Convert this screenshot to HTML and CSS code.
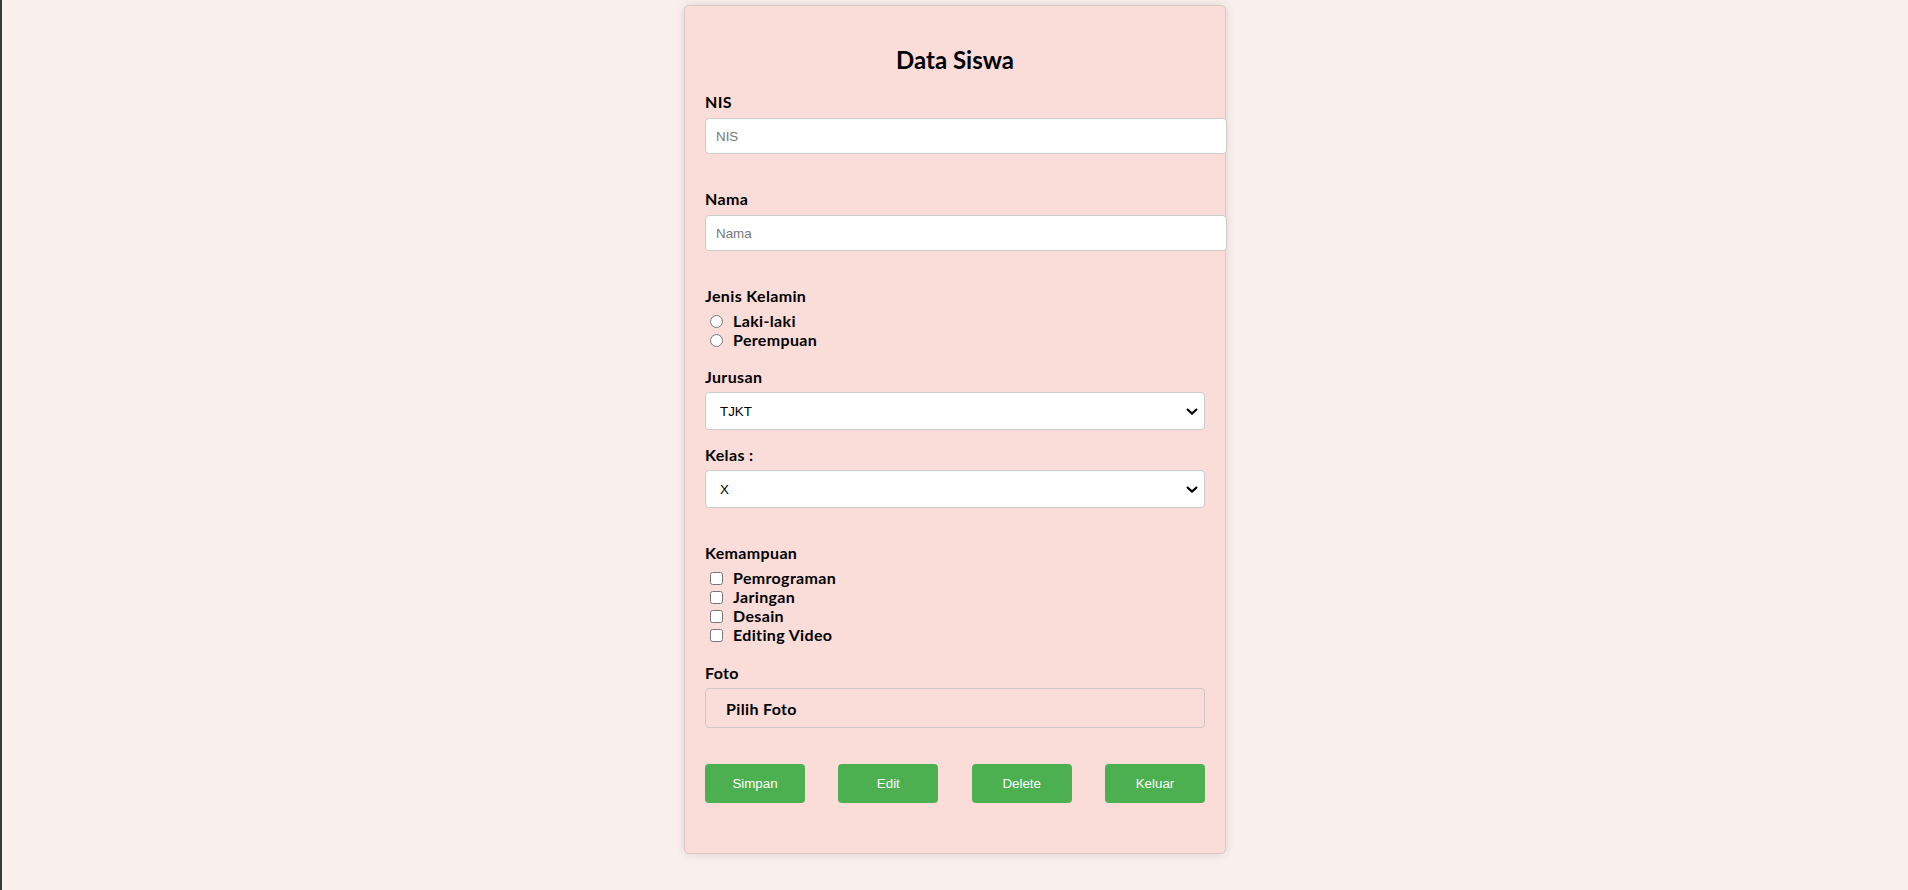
FILE: index.html
```html
<!DOCTYPE html>
<html lang="id">
<head>
<meta charset="utf-8">
<title>Data Siswa</title>
<link rel="stylesheet" href="styles.css">
</head>
<body>
<div class="page">
  <form class="card">
    <h2 class="title">Data Siswa</h2>

    <div class="field field-text">
      <label class="label" for="nis">NIS</label>
      <input class="text-input" id="nis" type="text" placeholder="NIS">
    </div>

    <div class="field field-text">
      <label class="label" for="nama">Nama</label>
      <input class="text-input" id="nama" type="text" placeholder="Nama">
    </div>

    <div class="field field-choice">
      <span class="label">Jenis Kelamin</span>
      <div class="options">
        <label class="option"><input class="opt-radio" type="radio" name="jk"><span>Laki-laki</span></label>
        <label class="option"><input class="opt-radio" type="radio" name="jk"><span>Perempuan</span></label>
      </div>
    </div>

    <div class="field field-select">
      <label class="label" for="jurusan">Jurusan</label>
      <select class="select" id="jurusan">
        <option>TJKT</option>
      </select>
    </div>

    <div class="field field-select-last">
      <label class="label" for="kelas">Kelas :</label>
      <select class="select" id="kelas">
        <option>X</option>
      </select>
    </div>

    <div class="field field-skills">
      <span class="label">Kemampuan</span>
      <div class="options">
        <label class="option"><input class="opt-check" type="checkbox"><span>Pemrograman</span></label>
        <label class="option"><input class="opt-check" type="checkbox"><span>Jaringan</span></label>
        <label class="option"><input class="opt-check" type="checkbox"><span>Desain</span></label>
        <label class="option"><input class="opt-check" type="checkbox"><span>Editing Video</span></label>
      </div>
    </div>

    <div class="field field-photo">
      <span class="label">Foto</span>
      <label class="file-box">Pilih Foto</label>
    </div>

    <div class="actions">
      <button class="btn" type="button">Simpan</button>
      <button class="btn" type="button">Edit</button>
      <button class="btn" type="button">Delete</button>
      <button class="btn" type="button">Keluar</button>
    </div>
  </form>
</div>
</body>
</html>
```

FILE: styles.css
```css
html, body {
  margin: 0;
  padding: 0;
}

body {
  background: #f9f0ee;
  font-family: Lato, "Open Sans", sans-serif;
  color: #000;
}

.page {
  min-height: 890px;
  box-sizing: border-box;
  border-left: 2px solid #3a3a3a;
  padding-top: 5px;
}

.card {
  width: 500px;
  margin: 0 auto;
  padding: 20px 20px 20px 20px;
  background: #fadcd8;
  border: 1px solid #d9c9c7;
  border-radius: 5px;
  box-shadow: 0 0 10px rgba(0, 0, 0, 0.12);
}

.title {
  margin: 19px 0 17px 0;
  font-size: 24px;
  line-height: 30px;
  font-weight: 700;
  text-align: center;
}

.label {
  display: block;
  font-size: 16px;
  line-height: 20px;
  font-weight: 700;
  letter-spacing: 0.35px;
  margin-bottom: 6px;
}

.field-text { margin-bottom: 35px; }
.field-choice { margin-bottom: 18px; }
.field-select { margin-bottom: 15px; }
.field-select-last { margin-bottom: 35px; }
.field-skills { margin-bottom: 19px; }
.field-photo { margin-bottom: 36px; }

.field-choice .label,
.field-skills .label,
.field-photo .label,
.field-select .label,
.field-select-last .label { margin-bottom: 5px; }

.text-input {
  display: block;
  width: 100%;
  height: 14px;
  padding: 10px;
  margin: 0;
  border: 1px solid #cccccc;
  border-radius: 4px;
  background: #fff;
  font-family: "Liberation Sans", Arial, sans-serif;
  font-size: 13.333px;
  color: #000;
}

.text-input::placeholder {
  color: #777777;
}

.options {
  display: flex;
  flex-direction: column;
}

.option {
  display: flex;
  align-items: center;
  gap: 10px;
  height: 19px;
  font-size: 16px;
  font-weight: 700;
  letter-spacing: 0.35px;
  line-height: 18px;
}

.opt-radio,
.opt-check {
  width: 13px;
  height: 13px;
  margin: 1px 0 0 5px;
  flex: none;
}

.select {
  display: block;
  width: 100%;
  height: 38px;
  box-sizing: border-box;
  margin: 0;
  padding: 0 10px 0 14px;
  border: 1px solid #cccccc;
  border-radius: 4px;
  background: #fff url("data:image/svg+xml,%3Csvg xmlns='http://www.w3.org/2000/svg' width='12' height='7' viewBox='0 0 12 7'%3E%3Cpath d='M1 1 L6 5.6 L11 1' fill='none' stroke='%23000' stroke-width='2.2'/%3E%3C/svg%3E") no-repeat right 6px center;
  -webkit-appearance: none;
  appearance: none;
  font-family: "Liberation Sans", Arial, sans-serif;
  font-size: 13.333px;
  color: #000;
}

.file-box {
  display: flex;
  align-items: center;
  height: 40px;
  box-sizing: border-box;
  padding: 0 20px;
  border: 1px solid #cfc6c5;
  border-radius: 4px;
  font-size: 16px;
  font-weight: 700;
  letter-spacing: 0.35px;
}

.actions {
  display: flex;
  justify-content: space-between;
  margin-bottom: 30px;
}

.btn {
  width: 100px;
  height: 39px;
  padding: 0;
  border: none;
  border-radius: 4px;
  background: #4caf50;
  color: #fff;
  font-family: "Liberation Sans", Arial, sans-serif;
  font-size: 13.333px;
}
```
